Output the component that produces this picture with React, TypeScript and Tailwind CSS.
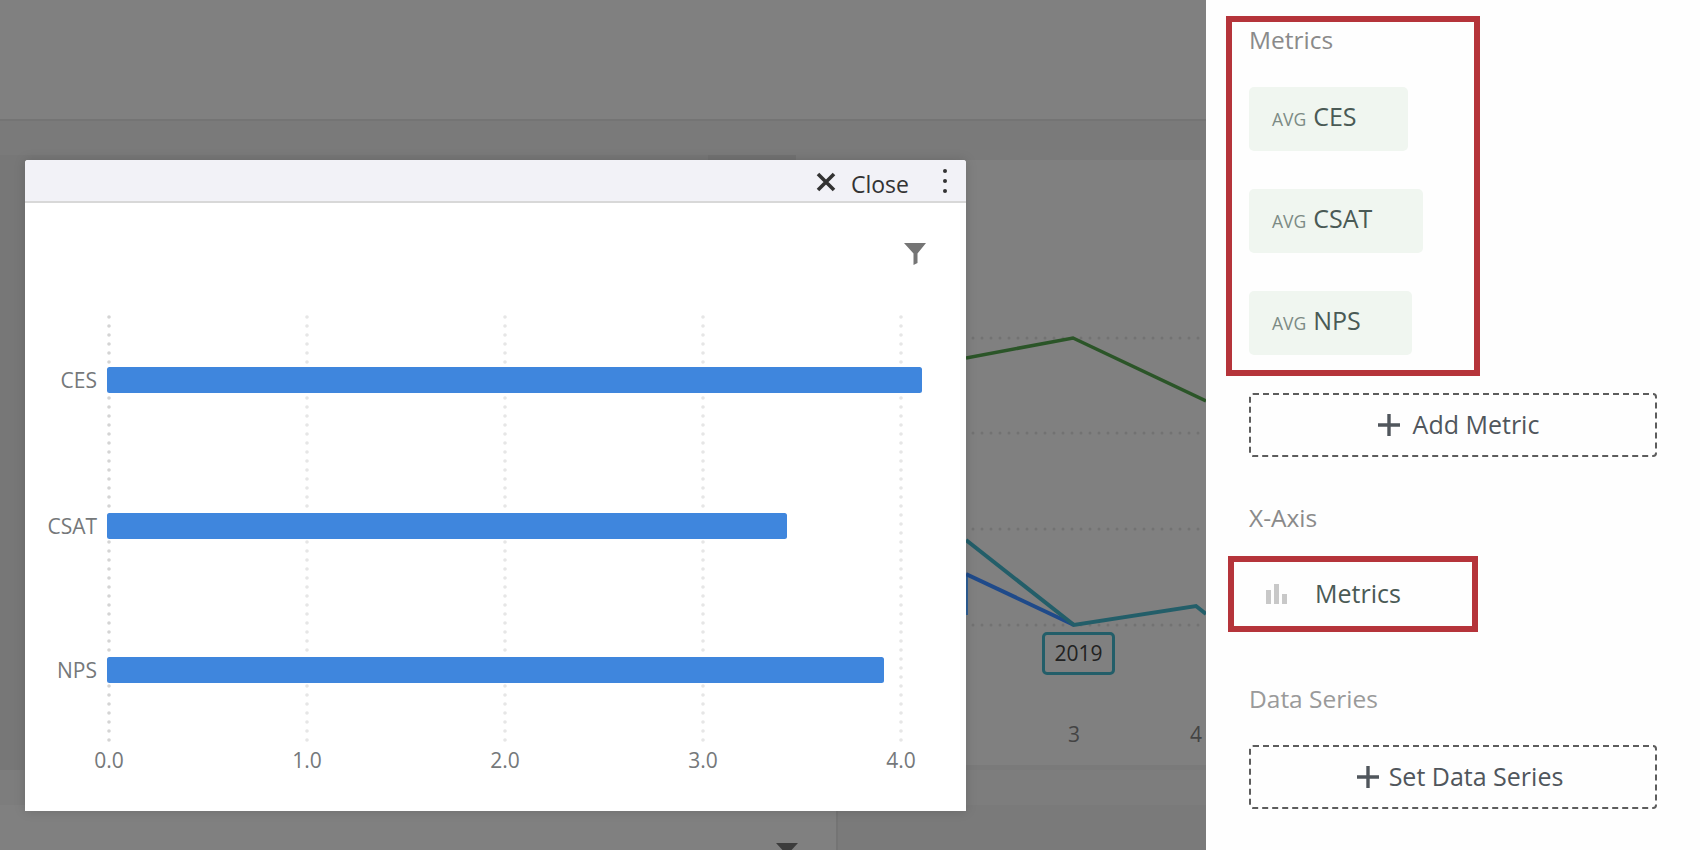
import React from 'react';

const font = { fontFamily: '"Open Sans", sans-serif' };

const ticks = [
  { x: 109, label: '0.0' },
  { x: 307, label: '1.0' },
  { x: 505, label: '2.0' },
  { x: 703, label: '3.0' },
  { x: 901, label: '4.0' },
];

const bars = [
  { label: 'CES', y: 367, end: 922 },
  { label: 'CSAT', y: 513, end: 787 },
  { label: 'NPS', y: 657, end: 884 },
];

const metrics = [
  { label: 'CES', width: 'w-[159px]' },
  { label: 'CSAT', width: 'w-[174px]' },
  { label: 'NPS', width: 'w-[163px]' },
];

function PlusIcon() {
  return (
    <svg width="22" height="22" viewBox="0 0 22 22" className="shrink-0">
      <path d="M11 0v22M0 11h22" stroke="#50565c" strokeWidth="3.4" />
    </svg>
  );
}

function AddButton({ label, className }: { label: string; className: string }) {
  return (
    <button className={`w-[408px] h-[64px] flex items-center justify-center border-2 border-dashed border-[#5c5c5c] rounded-[4px] text-[25px] text-[#50565c] ${className}`}>
      <PlusIcon />
      <span>{label}</span>
    </button>
  );
}

// line chart sitting behind the dialog
function BackgroundChart() {
  return (
    <svg viewBox="966 160 240 605" className="w-[240px] h-[605px] ml-auto">
      {[338, 433, 529, 625].map((y) => (
        <line key={y} x1="973" x2="1206" y1={y} y2={y} stroke="#727272" strokeWidth="3" strokeLinecap="round" strokeDasharray="0 9" />
      ))}
      <polyline points="966,358 1073,338 1206,401" fill="none" stroke="#2b5528" strokeWidth="3.5" />
      <line x1="967" x2="967" y1="574" y2="615" stroke="#2f5f95" strokeWidth="2" />
      <polyline points="966,574 1074,625" fill="none" stroke="#1f4a8a" strokeWidth="4" />
      <polyline points="966,540 1074,625 1196,606 1206,614" fill="none" stroke="#235e69" strokeWidth="4" />
      <text x="1074" y="742" textAnchor="middle" fontSize="21" fill="#444444">3</text>
      <text x="1196" y="742" textAnchor="middle" fontSize="21" fill="#444444">4</text>
    </svg>
  );
}

// bar chart in the dialog, drawn in page coordinates
function BarChart() {
  return (
    <svg viewBox="25 203 941 608" className="w-[941px] h-[608px] block">
      {ticks.map((t, i) => (
        <g key={t.x}>
          <line x1={t.x} x2={t.x} y1="317" y2="748" stroke={i === 0 ? '#d4d4d4' : '#e6e6e6'} strokeWidth="3.6" strokeLinecap="round" strokeDasharray="0 9" />
          <text x={t.x} y="768" textAnchor="middle" fontSize="21" fill="#75787a">{t.label}</text>
        </g>
      ))}
      {bars.map((b) => (
        <g key={b.label}>
          <rect x="107" y={b.y} width={b.end - 107} height="26" rx="2.5" fill="#3f86dd" />
          <text x="97" y={b.y + 20.5} textAnchor="end" fontSize="21" fill="#75787a">{b.label}</text>
        </g>
      ))}
    </svg>
  );
}

export default function App() {
  return (
    <div className="relative w-[1700px] h-[850px] flex overflow-hidden bg-white" style={font}>
      <main className="w-[1206px] h-full flex flex-col bg-[#7a7a7a]">
        <div className="h-[121px] shrink-0 bg-[#808080] border-b-2 border-[#747474]" />
        <div className="h-[34px] shrink-0" />
        <div className="h-[615px] shrink-0 flex">
          <div className="w-[708px] bg-[#777777]" />
          <div className="w-[498px] flex flex-col">
            <div className="h-[5px] shrink-0 flex">
              <div className="w-[88px] bg-[#727272]" />
            </div>
            <div className="h-[605px] bg-[#808080]">
              <BackgroundChart />
            </div>
          </div>
        </div>
        <div className="h-[35px] shrink-0 bg-[#7d7d7d]" />
        <div className="flex-1 flex">
          <div className="w-[838px] bg-[#808080] border-r-2 border-[#747474] flex justify-end">
            <div className="mt-[38px] mr-[38px] w-0 h-0 border-x-[11px] border-x-transparent border-t-[12px] border-t-[#3c3c3c]" />
          </div>
        </div>
      </main>

      {/* year tag on the line chart */}
      <div className="absolute left-[1042px] top-[632px] w-[73px] h-[43px] flex items-center justify-center border-[3px] border-[#235e69] rounded-[5px] text-[21px] text-[#222222]">
        2019
      </div>

      {/* dialog */}
      <div className="absolute left-[25px] top-[160px] w-[941px] h-[651px] bg-white rounded-t-[3px] shadow-[0_0_12px_rgba(0,0,0,0.15)]">
        <div className="h-[43px] flex items-center justify-end bg-[#f2f2f7] border-b-2 border-[#d8d8d8] rounded-t-[3px]">
          <svg width="20" height="20" viewBox="0 0 20 20" className="mr-[15px] mt-[2px]">
            <path d="M2 2l16 16M18 2L2 18" stroke="#333333" strokeWidth="3.6" />
          </svg>
          <span className="text-[23px] leading-[28px] mt-[7px] text-[#333333] mr-[34px]">Close</span>
          <div className="flex flex-col gap-[6px] mr-[19px]">
            <span className="w-[4px] h-[4px] rounded-full bg-[#333333]" />
            <span className="w-[4px] h-[4px] rounded-full bg-[#333333]" />
            <span className="w-[4px] h-[4px] rounded-full bg-[#333333]" />
          </div>
        </div>
        <div className="relative">
          <svg width="22" height="22" viewBox="0 0 22 22" className="absolute left-[879px] top-[40px]">
            <path d="M0 0h22l-8.500 10.500V20l-4 2V10.500z" fill="#757575" />
          </svg>
          <BarChart />
        </div>
      </div>

      {/* sidebar */}
      <aside className="w-[494px] h-full bg-[#fefefe] flex flex-col items-start pl-[20px] pt-[16px]">
        <div className="w-[254px] h-[360px] border-[6px] border-[#b5343a] pl-[17px]">
          <div className="text-[24.500px] leading-[29px] text-[#8a8a8a] mt-[3px]">Metrics</div>
          <div className="mt-[33px] flex flex-col gap-[38px]">
            {metrics.map((m) => (
              <div key={m.label} className={`${m.width} h-[64px] bg-[#f0f6f0] rounded-[5px] flex items-baseline pl-[23px] pt-[11px]`}>
                <span className="text-[17.500px] text-[#7c8a84] mr-[7px]">AVG</span>
                <span className="text-[25px] text-[#4a5a55]">{m.label}</span>
              </div>
            ))}
          </div>
        </div>
        <div className="ml-[23px] mt-[17px]">
          <AddButton label="Add Metric" className="gap-[13px] pl-[11px]" />
        </div>
        <div className="ml-[23px] mt-[46px] text-[24.500px] leading-[29px] text-[#8a8a8a]">X-Axis</div>
        <div className="ml-[2px] mt-[24px] w-[250px] h-[76px] border-[6px] border-[#b5343a] flex items-center pl-[32px]">
          <svg width="21" height="20" viewBox="0 0 21 20" className="shrink-0">
            <path d="M0 6h5v14H0zM8 0h5v20H8zM16 10h5v10h-5z" fill="#c8c8c8" />
          </svg>
          <span className="ml-[28px] text-[25px] text-[#4a5a55]">Metrics</span>
        </div>
        <div className="ml-[23px] mt-[52px] text-[24.500px] leading-[29px] text-[#9a9a9a]">Data Series</div>
        <div className="ml-[23px] mt-[32px]">
          <AddButton label="Set Data Series" className="gap-[10px] pl-[14px]" />
        </div>
      </aside>
    </div>
  );
}
